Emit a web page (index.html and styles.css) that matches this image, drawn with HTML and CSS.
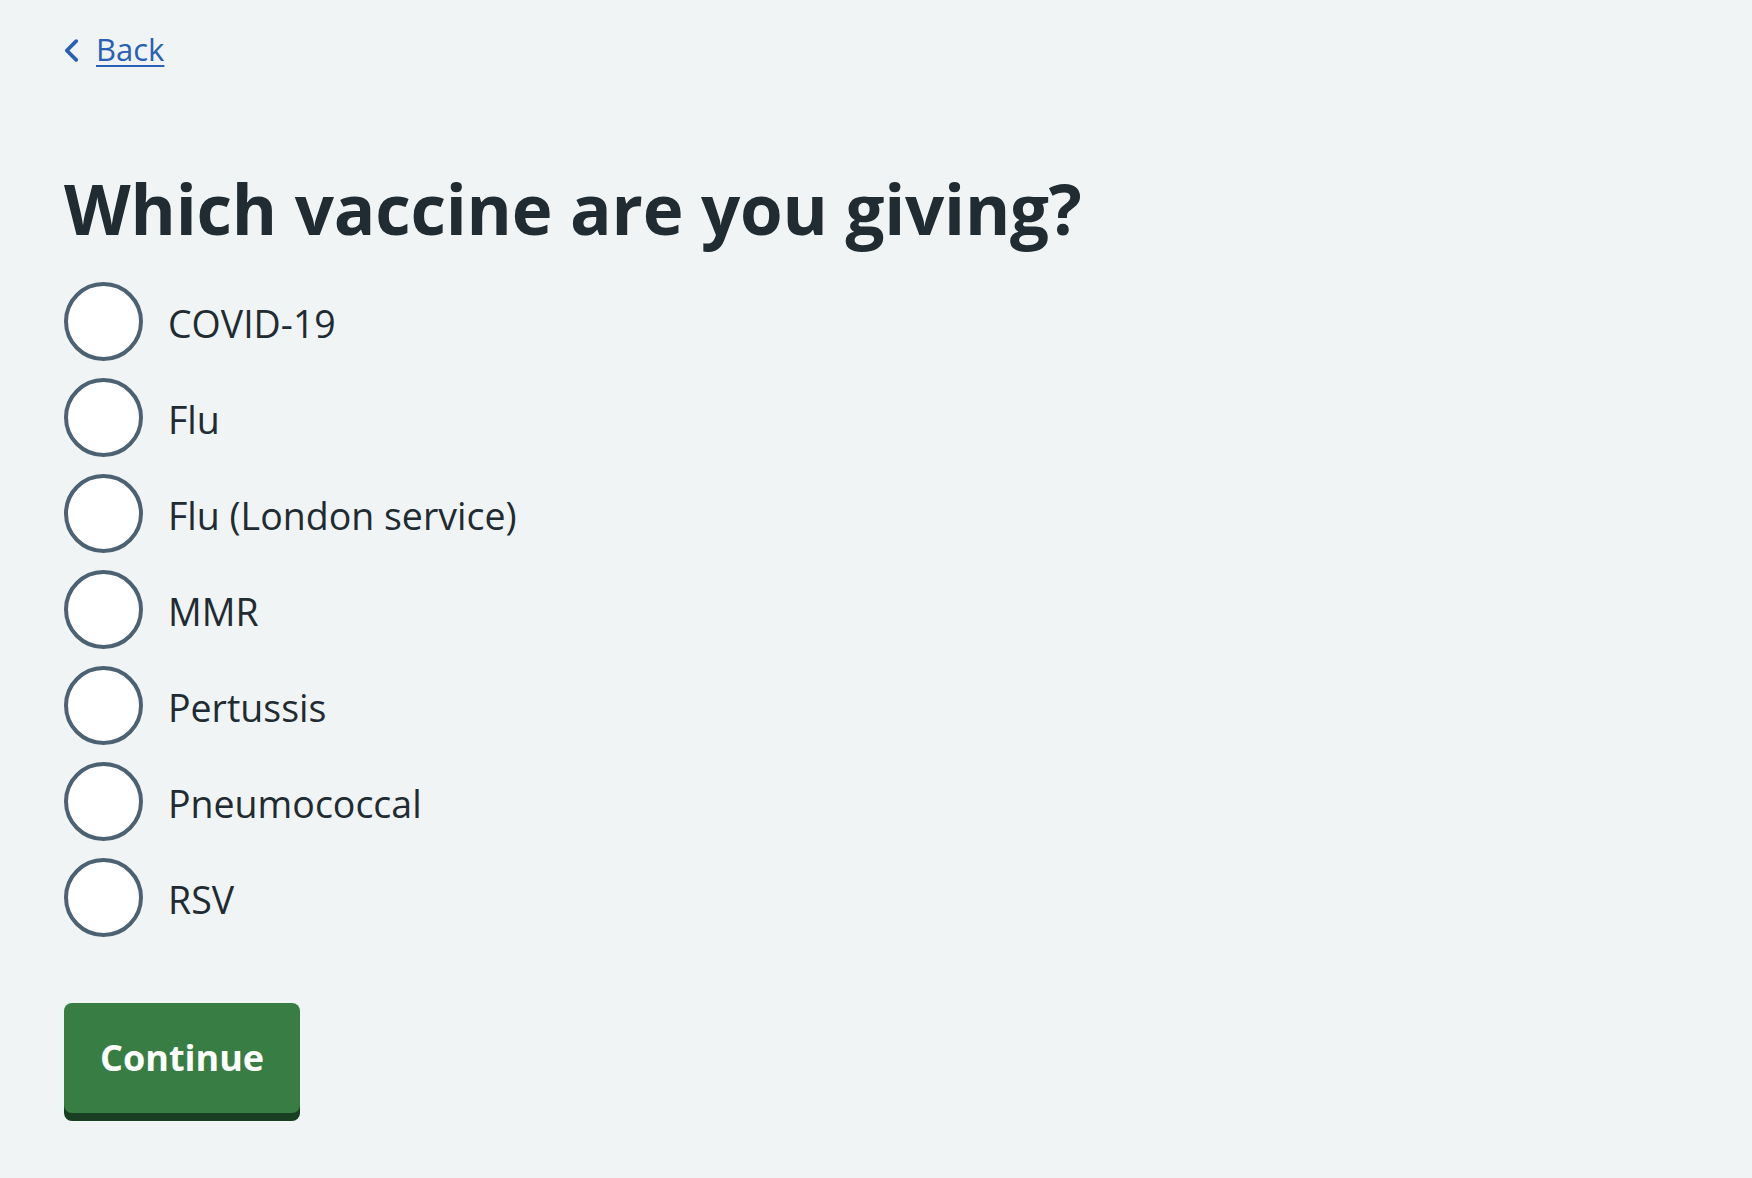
FILE: index.html
```html
<!DOCTYPE html>
<html lang="en">
<head>
<meta charset="utf-8">
<title>Which vaccine are you giving?</title>
<link rel="stylesheet" href="styles.css">
</head>
<body>
<main class="page">
  <a class="back-link" href="#">
    <svg class="back-icon" viewBox="8 6 8 12" width="15" height="23" aria-hidden="true"><path d="M8.5 12c0-.3.1-.5.3-.7l5-5c.4-.4 1-.4 1.4 0s.4 1 0 1.4L10.9 12l4.3 4.3c.4.4.4 1 0 1.4s-1 .4-1.4 0l-5-5c-.2-.2-.3-.4-.3-.7z"/></svg>
    <span class="back-text">Back</span>
  </a>
  <form class="form">
    <fieldset class="fieldset">
      <legend class="heading">Which vaccine are you giving?</legend>
      <div class="radios">
        <label class="radio"><input type="radio" name="vaccine" class="radio-input"><span class="radio-circle"></span><span class="radio-label">COVID-19</span></label>
        <label class="radio"><input type="radio" name="vaccine" class="radio-input"><span class="radio-circle"></span><span class="radio-label">Flu</span></label>
        <label class="radio"><input type="radio" name="vaccine" class="radio-input"><span class="radio-circle"></span><span class="radio-label">Flu (London service)</span></label>
        <label class="radio"><input type="radio" name="vaccine" class="radio-input"><span class="radio-circle"></span><span class="radio-label">MMR</span></label>
        <label class="radio"><input type="radio" name="vaccine" class="radio-input"><span class="radio-circle"></span><span class="radio-label">Pertussis</span></label>
        <label class="radio"><input type="radio" name="vaccine" class="radio-input"><span class="radio-circle"></span><span class="radio-label">Pneumococcal</span></label>
        <label class="radio"><input type="radio" name="vaccine" class="radio-input"><span class="radio-circle"></span><span class="radio-label">RSV</span></label>
      </div>
    </fieldset>
    <button type="button" class="button">Continue</button>
  </form>
</main>
</body>
</html>
```

FILE: styles.css
```css
html, body {
  margin: 0;
  padding: 0;
}

body {
  background: #f0f4f5;
  color: #212b32;
  font-family: "Open Sans", "Noto Sans", "Liberation Sans", sans-serif;
  min-height: 1178px;
}

.page {
  padding: 29px 0 0 64px;
  display: flex;
  flex-direction: column;
  align-items: flex-start;
}

.back-link {
  display: flex;
  align-items: center;
  gap: 17px;
  color: #2a60b8;
  font-size: 31px;
  line-height: 40px;
  text-decoration: none;
}

.back-icon {
  fill: #2a60b8;
  flex: none;
  position: relative;
  top: 1px;
}

.back-text {
  text-decoration: underline;
  text-decoration-thickness: 2px;
  text-underline-offset: 4px;
}

.form {
  margin-top: 98px;
  display: flex;
  flex-direction: column;
  align-items: flex-start;
}

.fieldset {
  border: 0;
  margin: 0;
  padding: 0;
  min-width: 0;
}

.heading {
  padding: 0;
  font-size: 69px;
  font-weight: 700;
  line-height: 83px;
  letter-spacing: -0.2px;
  color: #212b32;
}

.radios {
  margin-top: 32px;
  display: flex;
  flex-direction: column;
  gap: 17px;
}

.radio {
  display: flex;
  align-items: center;
  gap: 25px;
  cursor: pointer;
}

.radio-input {
  position: absolute;
  opacity: 0;
  width: 1px;
  height: 1px;
  margin: 0;
}

.radio-circle {
  flex: none;
  width: 79px;
  height: 79px;
  box-sizing: border-box;
  border: 4px solid #4c6272;
  border-radius: 50%;
  background: #ffffff;
}

.radio-label {
  font-size: 37.5px;
  line-height: 48px;
  padding-top: 4px;
  color: #212b32;
}

.button {
  margin-top: 66px;
  height: 110px;
  padding: 0 36px;
  border: 0;
  border-radius: 8px;
  background: #387e44;
  box-shadow: 0 8px 0 #193f22;
  color: #ffffff;
  font-family: "Open Sans", "Noto Sans", "Liberation Sans", sans-serif;
  font-size: 36px;
  font-weight: 700;
  line-height: 48px;
  cursor: pointer;
}
```
